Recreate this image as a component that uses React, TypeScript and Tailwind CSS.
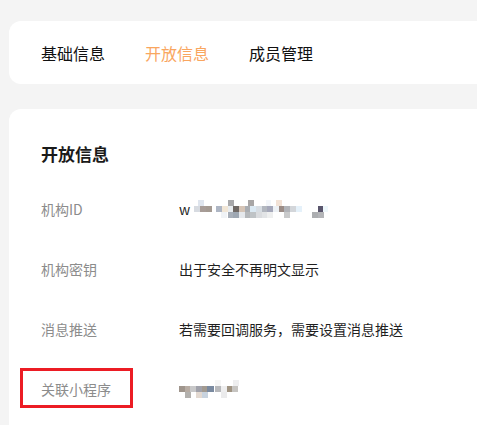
import React from "react";

const font = { fontFamily: '"Noto Sans CJK SC", "Noto Sans", sans-serif' };

type Cell = [number, number, number, string];

const mosaic1: Cell[] = [
  // row 1 (y 200-206)
  [197, 200, 6, "#dfe5ee"],
  [227, 200, 6, "#a9a9ab"],
  [247, 200, 6, "#a8a6a6"],
  [265, 200, 5, "#f3f6fa"],
  [275, 200, 6, "#f2e2d6"],
  // row 2 (y 206-212)
  [193, 206, 6, "#d7dbe1"],
  [199, 206, 6, "#a79c97"],
  [205, 206, 6, "#a49a92"],
  [215, 206, 6, "#aeb6c4"],
  [221, 206, 6, "#f1e6d6"],
  [227, 206, 6, "#e8ecef"],
  [232, 206, 6, "#6f6864"],
  [238, 206, 6, "#d5c4b6"],
  [244, 206, 6, "#a9adb2"],
  [249, 206, 6, "#dbe9f3"],
  [255, 206, 6, "#d7dde3"],
  [261, 206, 6, "#b2b7bf"],
  [266, 206, 6, "#a5a8ba"],
  [272, 206, 6, "#edf1f5"],
  [278, 206, 6, "#9b8c86"],
  [283, 206, 6, "#b1b3b8"],
  [289, 206, 6, "#d3d6da"],
  [295, 206, 6, "#e5f1fa"],
  [317, 206, 6, "#59556c"],
  [322, 206, 5, "#eef7fb"],
  // row 3 (y 212-217)
  [220, 212, 6, "#f0f3f6"],
  [227, 212, 6, "#a8afb9"],
  [232, 212, 6, "#9ea7b2"],
  [238, 212, 6, "#e5e8ec"],
  [244, 212, 6, "#b5b8bb"],
  [249, 212, 6, "#bfc3c6"],
  [255, 212, 6, "#dadcdf"],
  [261, 212, 6, "#e2e4e6"],
  [266, 212, 6, "#eeefef"],
  [283, 212, 6, "#c9cacb"],
  [311, 212, 6, "#acaeb1"],
  [317, 212, 6, "#b4b5b8"],
];

const mosaic2: Cell[] = [
  [215, 380, 6, "#f6f6f6"],
  [233, 380, 6, "#eeeeef"],
  [179, 386, 6, "#9f958c"],
  [185, 386, 6, "#b7aca3"],
  [190, 386, 6, "#c8c8c9"],
  [196, 386, 6, "#a1a2ab"],
  [202, 386, 6, "#a29a90"],
  [207, 386, 7, "#7a8aa0"],
  [215, 386, 6, "#b8b9bc"],
  [221, 386, 6, "#eeeeef"],
  [227, 386, 6, "#a09483"],
  [232, 386, 6, "#c6c4c1"],
  [185, 392, 6, "#b3b1ae"],
  [196, 392, 6, "#e3d9d1"],
  [202, 392, 6, "#c8d3df"],
  [221, 392, 6, "#ebebec"],
];

function Mosaic({ cells, x, y, w, h }: { cells: Cell[]; x: number; y: number; w: number; h: number }) {
  return (
    <svg width={w} height={h} viewBox={`${x} ${y} ${w} ${h}`} className="block shrink-0">
      {cells.map(([cx, cy, cw, c], i) => (
        <rect key={i} x={cx} y={cy} width={cw} height={6} fill={c} />
      ))}
    </svg>
  );
}

function Row({ label, children, boxed }: { label: string; children: React.ReactNode; boxed?: boolean }) {
  return (
    <div className="flex h-[40px] items-center">
      <div className="relative w-[138px] shrink-0 text-[14px] text-[#8c8c8c]">
        {boxed && (
          <div className="absolute left-[-21px] top-[-11px] h-[40px] w-[113px] border-[3px] border-[#ec1c24]" />
        )}
        {label}
      </div>
      <div className="flex items-center text-[14px] text-[#1f1f1f]">{children}</div>
    </div>
  );
}

export default function App() {
  return (
    <div className="h-[425px] w-[477px] overflow-hidden bg-[#f4f4f4] pl-[9px] pt-[21px]" style={font}>
      <div className="flex h-[63px] items-center gap-[40px] rounded-l-[12px] bg-white pl-[32px] text-[16px] leading-[24px] text-[#111]">
        <span>基础信息</span>
        <span className="text-[#f9a65f]">开放信息</span>
        <span>成员管理</span>
      </div>
      <div className="mt-[25px] h-[400px] rounded-l-[12px] bg-white pl-[32px] pt-[33px]">
        <div className="text-[17px] font-bold leading-[24px] text-[#1a1a1a]">开放信息</div>
        <div className="mt-[23px] flex flex-col gap-[20px]">
          <Row label="机构ID">
            <span className="leading-[18px]">w</span>
            <Mosaic cells={mosaic1} x={189} y={200} w={140} h={18} />
          </Row>
          <Row label="机构密钥">出于安全不再明文显示</Row>
          <Row label="消息推送">若需要回调服务，需要设置消息推送</Row>
          <Row label="关联小程序" boxed>
            <Mosaic cells={mosaic2} x={179} y={380} w={62} h={18} />
          </Row>
        </div>
      </div>
    </div>
  );
}
